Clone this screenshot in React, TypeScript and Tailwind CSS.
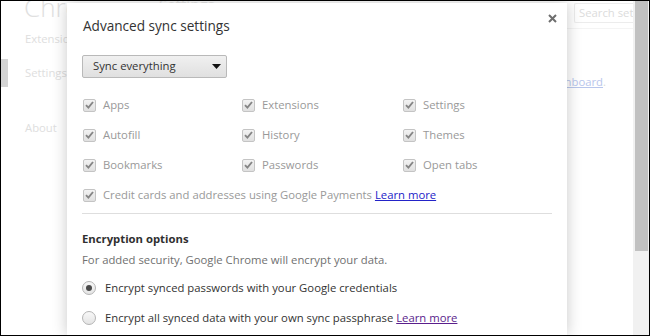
import React from "react";

const font = { fontFamily: '"Open Sans", "Noto Sans", sans-serif' };

function Check({ label }: { label: React.ReactNode }) {
  return (
    <div className="flex h-[30px] items-center">
      <span className="flex h-[13px] w-[13px] shrink-0 items-center justify-center rounded-[2px] border border-[#c4c4c4] bg-gradient-to-b from-[#f2f2f2] to-[#e0e0e0]">
        <svg width="9" height="8" viewBox="0 0 9 8">
          <path d="M1 4.2 L3.4 6.6 L8 1" fill="none" stroke="#858585" strokeWidth="1.9" />
        </svg>
      </span>
      <span className="ml-[7px] whitespace-nowrap text-[#999]">{label}</span>
    </div>
  );
}

function Radio({ checked, children }: { checked?: boolean; children: React.ReactNode }) {
  return (
    <div className="flex h-[30px] items-center">
      <span className="flex h-[14px] w-[14px] shrink-0 items-center justify-center rounded-full border border-[#b4b4b4] bg-gradient-to-b from-[#f8f8f8] to-[#e4e4e4]">
        {checked && <span className="h-[6px] w-[6px] rounded-full bg-[#4a4a4a]" />}
      </span>
      <span className="ml-[9px] whitespace-nowrap text-[#333]">{children}</span>
    </div>
  );
}

export default function App() {
  return (
    <div style={font} className="relative h-[336px] w-[650px] overflow-hidden border border-black bg-white text-[11.3px]">
      {/* background page */}
      <div className="flex h-full">
        <div className="relative w-[150px] shrink-0">
          <div className="ml-[23px] mt-[-7px] text-[26px] font-light leading-[26px] text-[#e0e0e0]">Chrome</div>
          <div className="ml-[24px] mt-[10px] leading-[18px] text-[#dedede]">Extensions</div>
          <div className="mt-[11px] flex h-[28px] items-center">
            <div className="h-full w-[7px] bg-[#d4d4d4]" />
            <div className="ml-[17px] text-[#dedede]">Settings</div>
          </div>
          <div className="ml-[24px] mt-[33px] text-[#dedede]">About</div>
        </div>
        <div className="flex min-w-0 flex-1 flex-col">
          <div className="flex h-[28px] items-start border-b border-[#f4f4f4]">
            <div className="ml-[8px] mt-[-8px] text-[15px] text-[#e8e8e8]">Settings</div>
            <div className="ml-auto mt-[2px] h-[20px] w-[59px] overflow-hidden whitespace-nowrap rounded-l-[2px] border border-r-0 border-[#ececec] pl-[4px] leading-[18px] text-[#dcdcdc]">
              Search settings
            </div>
          </div>
          <div className="mr-[27px] mt-[45px] flex justify-end whitespace-nowrap text-[#dadada]">
            <span>Manage synced data on </span>
            <span className="ml-[3px] text-[#b8c6ec] underline">Google Dashboard</span>
            <span>.</span>
          </div>
        </div>
        <div className="w-[16px] shrink-0 bg-[#f1f1f1] pl-[2px]">
          <div className="h-[250px] w-[13px] bg-[#c1c1c1]" />
        </div>
      </div>

      {/* dialog */}
      <div className="absolute bottom-0 left-[66px] top-[2px] w-[500px] bg-white px-[15px] pt-[13px] shadow-[0_0_14px_rgba(0,0,0,0.22)]">
        <button className="absolute right-[10px] top-[11px] flex h-[9px] w-[9px] items-center justify-center">
          <svg width="9" height="9" viewBox="0 0 9 9">
            <path d="M1 1 L8 8 M8 1 L1 8" stroke="#6e6e6e" strokeWidth="2" />
          </svg>
        </button>
        <div className="ml-[1px] text-[13.6px] leading-[20px] text-[#333]">Advanced sync settings</div>
        <div className="mt-[19px] flex h-[23px] w-[145px] items-center rounded-[2px] border border-[#b9b9b9] bg-gradient-to-b from-[#f0f0f0] to-[#e0e0e0] pl-[10px] pr-[5px] text-[#333]">
          <span>Sync everything</span>
          <svg className="ml-auto" width="9" height="5" viewBox="0 0 9 5">
            <path d="M0 0 H9 L4.5 5 Z" fill="#111" />
          </svg>
        </div>
        <div className="mt-[12px] grid grid-cols-[159px_161px_1fr] pl-px">
          <Check label="Apps" />
          <Check label="Extensions" />
          <Check label="Settings" />
          <Check label="Autofill" />
          <Check label="History" />
          <Check label="Themes" />
          <Check label="Bookmarks" />
          <Check label="Passwords" />
          <Check label="Open tabs" />
        </div>
        <div className="pl-px">
          <Check
            label={
              <>
                Credit cards and addresses using Google Payments{" "}
                <a className="text-[#2323c8] underline">Learn more</a>
              </>
            }
          />
        </div>
        <div className="mt-[3px] h-px bg-[#dedede]" />
        <div className="mt-[16px] font-bold leading-[18px] text-[#303030]">Encryption options</div>
        <div className="mt-[3px] leading-[18px] text-[#707070]">
          For added security, Google Chrome will encrypt your data.
        </div>
        <div className="mt-[4px]">
          <Radio checked>Encrypt synced passwords with your Google credentials</Radio>
          <Radio>
            Encrypt all synced data with your own sync passphrase{" "}
            <a className="text-[#5a1e8c] underline">Learn more</a>
          </Radio>
        </div>
      </div>
    </div>
  );
}
